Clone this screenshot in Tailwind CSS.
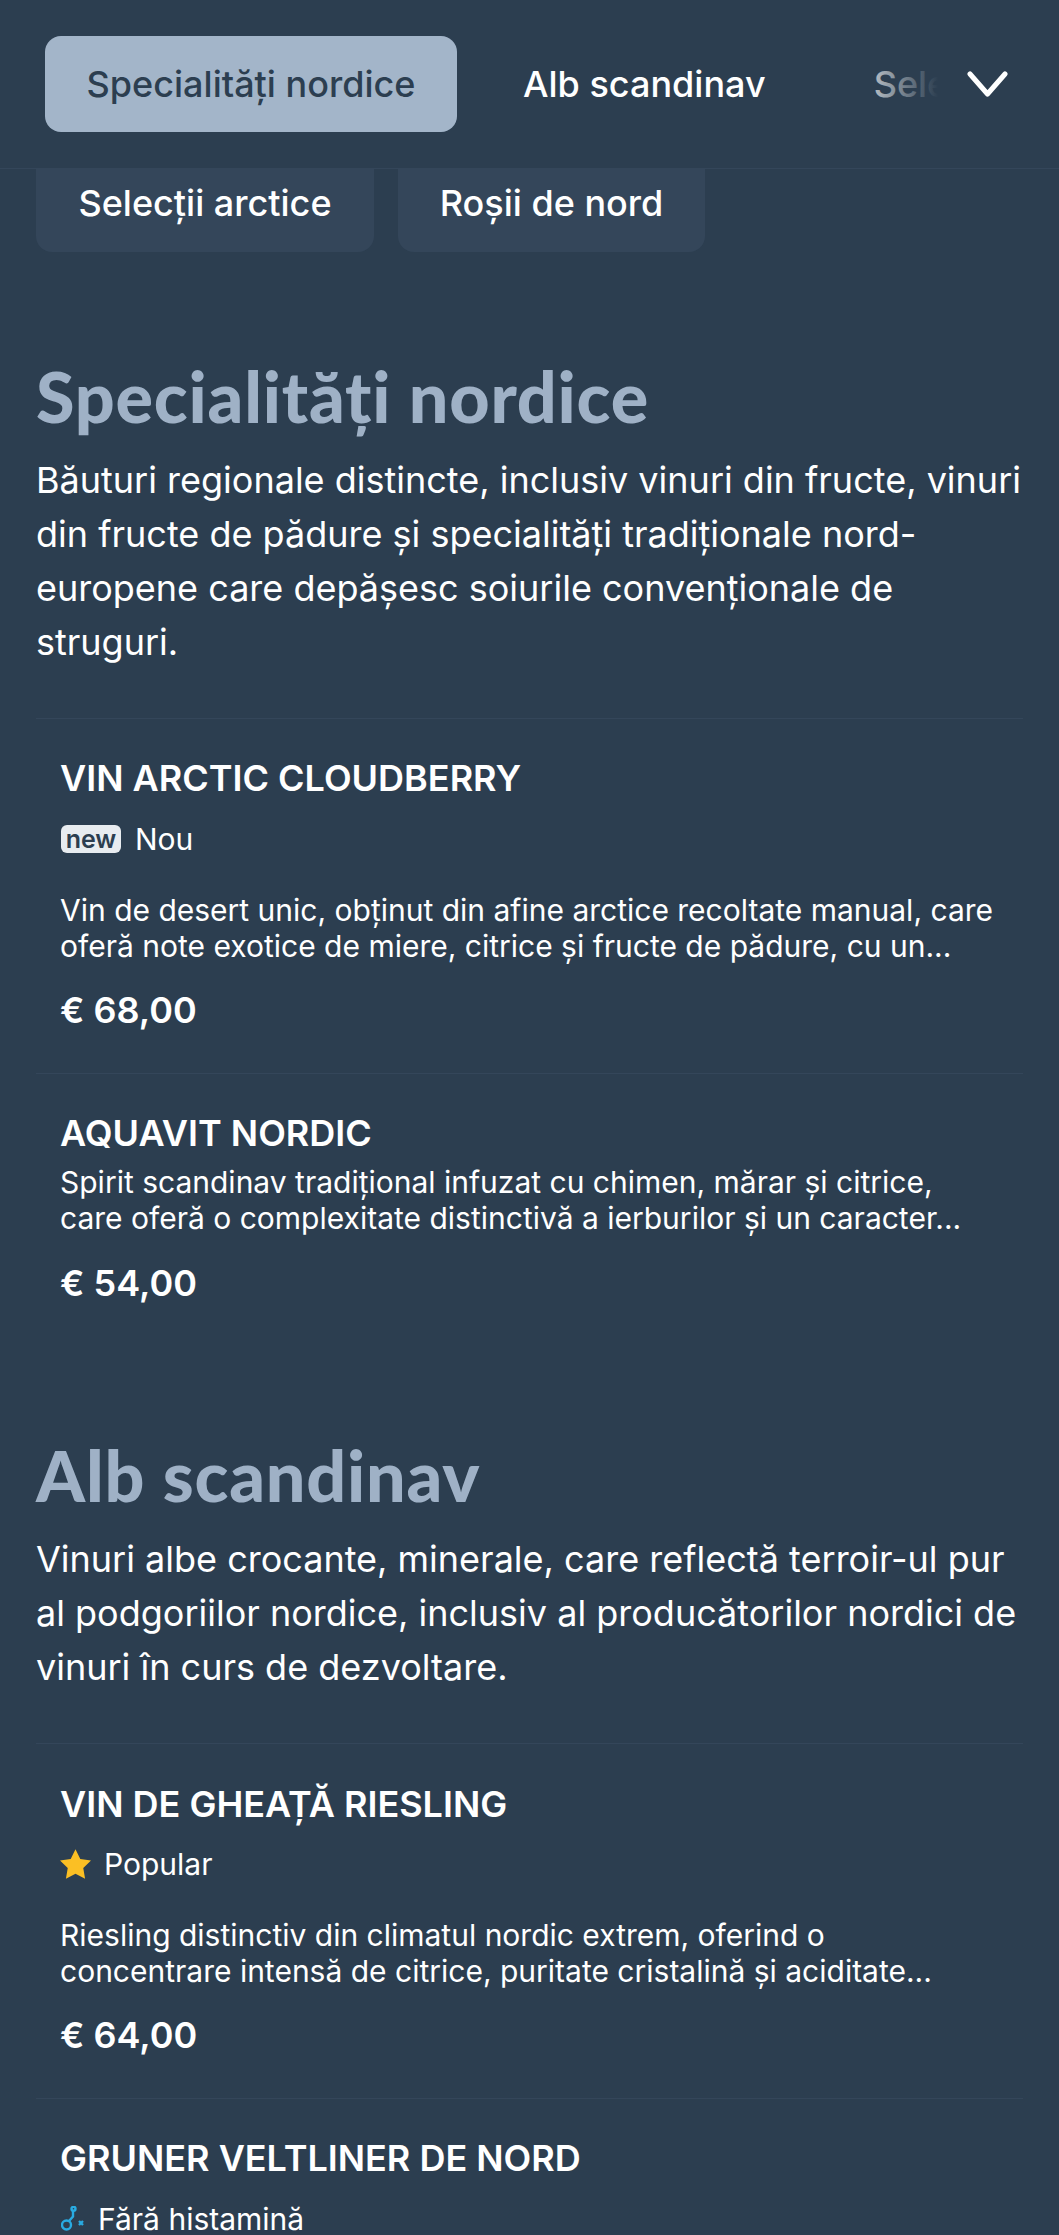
<!DOCTYPE html>
<html lang="ro">
<head>
  <meta charset="UTF-8" />
  <meta name="viewport" content="width=device-width, initial-scale=1" />
  <title>Meniu</title>
  <script src="https://cdn.jsdelivr.net/npm/@tailwindcss/browser@4"></script>
</head>
<body class="bg-[#2c3e50] text-white font-['Inter',sans-serif] h-[2235px] overflow-hidden">

  <!-- bara de categorii -->
  <header class="relative h-[169px] border-b border-[#34465a] overflow-hidden">
    <nav class="flex items-center gap-6 pl-[45px] h-[168px] whitespace-nowrap text-[36px] font-medium">
      <span class="h-[96px] w-[412px] shrink-0 flex items-center justify-center rounded-2xl bg-[#a3b5c9] text-[#2c3e50]">Specialități nordice</span>
      <span class="px-[42px] shrink-0">Alb scandinav</span>
      <span class="px-[42px] shrink-0">Selecții arctice</span>
    </nav>
    <div class="absolute right-0 top-0 h-full w-[220px] flex items-center justify-end pr-[51px] bg-gradient-to-r from-transparent via-[#2c3e50] via-45% to-[#2c3e50]">
      <svg class="w-[41px] h-[26px]" viewBox="0 0 41 26" fill="none" stroke="#fff" stroke-width="5" stroke-linecap="round" stroke-linejoin="round"><path d="M3 3l17.500 20L38 3" /></svg>
    </div>
  </header>

  <div class="flex gap-6 pl-9 text-[36px] font-medium whitespace-nowrap">
    <span class="h-[83px] w-[338px] pb-[15px] flex items-center justify-center rounded-b-2xl bg-[#34465a]">Selecții arctice</span>
    <span class="h-[83px] w-[307px] pb-[15px] flex items-center justify-center rounded-b-2xl bg-[#34465a]">Roșii de nord</span>
  </div>

  <main class="px-9">
    <section class="mt-[106px]">
      <h2 class="font-['Lato',sans-serif] font-black text-[70px] tracking-[0.800px] leading-[76px] text-[#9fb1c6]">Specialități nordice</h2>
      <p class="mt-[19px] text-[36px] leading-[54px]">Băuturi regionale distincte, inclusiv vinuri din fructe, vinuri din fructe de pădure și specialități tradiționale nord-europene care depășesc soiurile convenționale de struguri.</p>
      <ul class="mt-[49px]">
        <li class="border-t border-[#34465a] px-6 pt-[37px] pb-[41px]">
          <h3 class="text-[36px] leading-[44px] font-semibold">VIN ARCTIC CLOUDBERRY</h3>
          <div class="mt-[17px] flex items-center gap-[14px] text-[30px] leading-[44px]">
            <span class="ml-px h-[28px] w-[60px] flex items-center justify-center rounded-md bg-[#e8ecf0] text-[#2c3e50] text-[25px] font-semibold">new</span>
            <span>Nou</span>
          </div>
          <p class="mt-[31px] text-[30px] leading-[36px]">Vin de desert unic, obținut din afine arctice recoltate manual, care oferă note exotice de miere, citrice și fructe de pădure, cu un...</p>
          <p class="mt-[24px] text-[36px] leading-[44px] font-semibold">€ 68,00</p>
        </li>
        <li class="border-t border-[#34465a] px-6 pt-[37px]">
          <h3 class="text-[36px] leading-[44px] font-semibold">AQUAVIT NORDIC</h3>
          <p class="mt-[9px] text-[30px] leading-[36px]">Spirit scandinav tradițional infuzat cu chimen, mărar și citrice, care oferă o complexitate distinctivă a ierburilor și un caracter...</p>
          <p class="mt-[25px] text-[36px] leading-[44px] font-semibold">€ 54,00</p>
        </li>
      </ul>
    </section>

    <section class="mt-[132px]">
      <h2 class="font-['Lato',sans-serif] font-black text-[70px] tracking-[0.800px] leading-[76px] text-[#9fb1c6]">Alb scandinav</h2>
      <p class="mt-[19px] text-[36px] leading-[54px]">Vinuri albe crocante, minerale, care reflectă terroir-ul pur al podgoriilor nordice, inclusiv al producătorilor nordici de vinuri în curs de dezvoltare.</p>
      <ul class="mt-[49px]">
        <li class="border-t border-[#34465a] px-6 pt-[38px] pb-[41px]">
          <h3 class="text-[36px] leading-[44px] font-semibold">VIN DE GHEAȚĂ RIESLING</h3>
          <div class="mt-[16px] flex items-center gap-[13px] text-[30px] leading-[44px]">
            <svg class="w-[31px] h-[30px] shrink-0" viewBox="2 2 20 19.100" fill="#fbbf24"><path d="M12 2l3.090 6.260L22 9.270l-5 4.870 1.180 6.880L12 17.770l-6.180 3.250L7 14.140 2 9.270l6.910-1.010z" /></svg>
            <span>Popular</span>
          </div>
          <p class="mt-[31px] text-[30px] leading-[36px]">Riesling distinctiv din climatul nordic extrem, oferind o concentrare intensă de citrice, puritate cristalină și aciditate...</p>
          <p class="mt-[24px] text-[36px] leading-[44px] font-semibold">€ 64,00</p>
        </li>
        <li class="border-t border-[#34465a] px-6 pt-[37px]">
          <h3 class="text-[36px] leading-[44px] font-semibold">GRUNER VELTLINER DE NORD</h3>
          <div class="mt-[17px] flex items-center gap-[13px] text-[30px] leading-[44px]">
            <svg class="w-[24px] h-[26px] shrink-0 ml-px" viewBox="0 0 24 26" fill="none" stroke="#29abe2" stroke-width="2.400"><circle cx="5.500" cy="19" r="4.500" /><circle cx="12.500" cy="2.800" r="2" /><path d="M8 15l4-4.500V5" /><path d="M18 15l4 4M22 15l-4 4" /></svg>
            <span>Fără histamină</span>
          </div>
        </li>
      </ul>
    </section>
  </main>
</body>
</html>
